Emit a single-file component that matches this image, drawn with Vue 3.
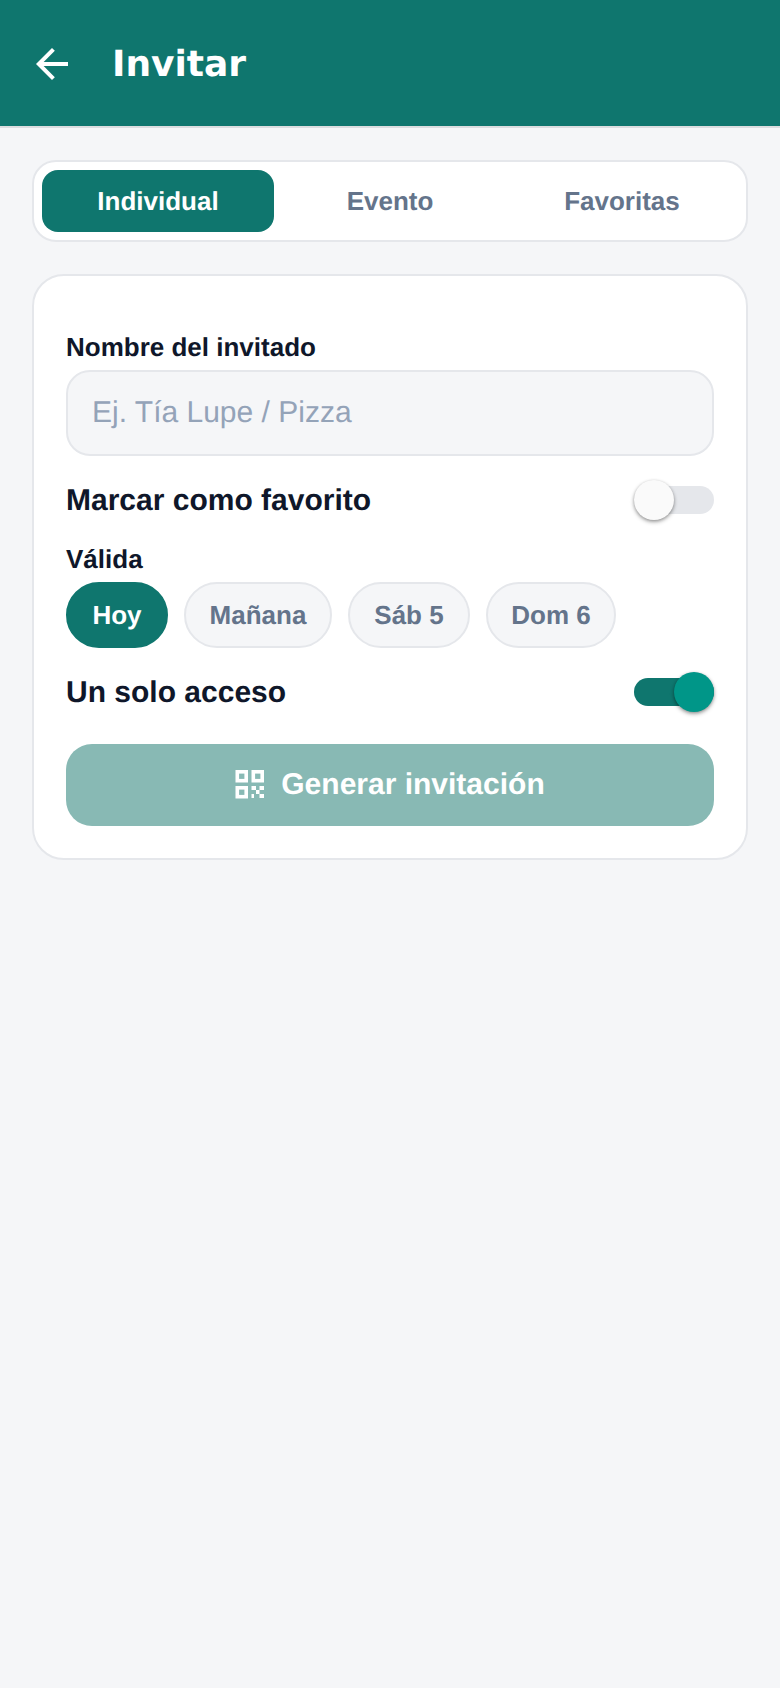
<script setup>
const tabs = ['Individual', 'Evento', 'Favoritas']
const chips = [
  { label: 'Hoy', width: 102 },
  { label: 'Mañana', width: 148 },
  { label: 'Sáb 5', width: 122 },
  { label: 'Dom 6', width: 130 },
]
const qrFrames = [
  { x: 2.3, y: 2.8 },
  { x: 18.3, y: 2.8 },
  { x: 2.3, y: 18.8 },
]
const qrBits = [
  { x: 16.5, y: 17, w: 4.5, h: 4 },
  { x: 24.5, y: 17, w: 4.5, h: 4 },
  { x: 21, y: 21, w: 3.5, h: 4 },
  { x: 16.5, y: 25, w: 2.5, h: 4 },
  { x: 24.5, y: 25, w: 4.5, h: 4 },
]
</script>

<template>
  <div class="page">
    <header class="bar">
      <svg class="back" viewBox="0 0 24 24" aria-label="Volver">
        <path d="M20 11H7.83l5.59-5.59L12 4l-8 8 8 8 1.41-1.41L7.83 13H20v-2z" />
      </svg>
      <h1 class="title">Invitar</h1>
    </header>

    <main class="content">
      <nav class="tabs">
        <button v-for="(t, i) in tabs" :key="t" class="tab" :class="{ on: i === 0 }">{{ t }}</button>
      </nav>

      <section class="card">
        <div class="field">
          <label class="label" for="guest">Nombre del invitado</label>
          <input id="guest" class="input" placeholder="Ej. Tía Lupe / Pizza" />
        </div>

        <div class="row">
          <span class="row-text">Marcar como favorito</span>
          <span class="switch"><span class="track"></span><span class="thumb"></span></span>
        </div>

        <div class="field">
          <span class="label">Válida</span>
          <div class="chips">
            <button
              v-for="(c, i) in chips"
              :key="c.label"
              class="chip"
              :class="{ on: i === 0 }"
              :style="{ width: c.width + 'px' }"
            >{{ c.label }}</button>
          </div>
        </div>

        <div class="row">
          <span class="row-text">Un solo acceso</span>
          <span class="switch active"><span class="track"></span><span class="thumb"></span></span>
        </div>

        <button class="generate">
          <svg class="qr" viewBox="0 0 30 30">
            <rect
              v-for="f in qrFrames"
              :key="f.x + '-' + f.y"
              class="qr-frame"
              :x="f.x"
              :y="f.y"
              width="8.9"
              height="8.9"
            />
            <rect
              v-for="b in qrBits"
              :key="b.x + '-' + b.y"
              class="qr-bit"
              :x="b.x"
              :y="b.y"
              :width="b.w"
              :height="b.h"
            />
          </svg>
          <span>Generar invitación</span>
        </button>
      </section>
    </main>
  </div>
</template>

<style scoped>
.page {
  min-height: 1688px;
  background: #f5f6f8;
  font-family: "Liberation Sans", Arial, sans-serif;
  color: #0f172a;
  box-sizing: border-box;
  text-rendering: geometricPrecision;
}
.bar {
  height: 126px;
  background: #0f766e;
  border-bottom: 2px solid #dcdddf;
  display: flex;
  align-items: center;
  padding-left: 28px;
  gap: 36px;
}
.back {
  width: 48px;
  height: 48px;
  margin-top: 2px;
  fill: #fff;
  flex: none;
}
.title {
  margin: 2px 0 0;
  font-family: "DejaVu Sans", sans-serif;
  font-size: 36px;
  font-weight: 700;
  color: #fff;
}
.content {
  padding: 32px;
  display: flex;
  flex-direction: column;
  gap: 32px;
}
.tabs {
  display: flex;
  padding: 8px;
  background: #fff;
  border: 2px solid #e5e7eb;
  border-radius: 24px;
}
.tab {
  flex: 1;
  height: 62px;
  border: 0;
  border-radius: 16px;
  background: transparent;
  font: 700 26px "Liberation Sans", Arial, sans-serif;
  text-rendering: geometricPrecision;
  color: #64748b;
  padding: 0;
}
.tab.on {
  background: #0f766e;
  color: #fff;
}
.card {
  background: #fff;
  border: 2px solid #e5e7eb;
  border-radius: 32px;
  padding: 56px 32px 32px;
  display: flex;
  flex-direction: column;
  gap: 24px;
}
.field {
  display: flex;
  flex-direction: column;
  gap: 8px;
}
.label {
  font-size: 26px;
  font-weight: 700;
  line-height: 30px;
}
.input {
  height: 86px;
  box-sizing: border-box;
  width: 100%;
  padding: 0 24px;
  background: #f5f6f8;
  border: 2px solid #e5e7eb;
  border-radius: 24px;
  font: 400 30px "Liberation Sans", Arial, sans-serif;
  text-rendering: geometricPrecision;
  outline: none;
}
.input::placeholder {
  color: #94a3b8;
  opacity: 1;
}
.row {
  display: flex;
  align-items: center;
  justify-content: space-between;
}
.row-text {
  margin-top: 2px;
  font-size: 30px;
  font-weight: 700;
}
.switch {
  display: flex;
  align-items: center;
  width: 80px;
  height: 40px;
  position: relative;
}
.track {
  width: 100%;
  height: 28px;
  border-radius: 14px;
  background: #e5e7eb;
}
.thumb {
  position: absolute;
  left: 0;
  top: 0;
  width: 40px;
  height: 40px;
  border-radius: 50%;
  background: #fafafa;
  box-shadow: 0 2px 4px rgba(0, 0, 0, 0.3), 0 1px 3px rgba(0, 0, 0, 0.2);
}
.switch.active .track {
  background: #0f766e;
}
.switch.active .thumb {
  left: 40px;
  background: #009688;
}
.chips {
  display: flex;
  gap: 16px;
}
.chip {
  height: 66px;
  padding: 0;
  border: 2px solid #e5e7eb;
  border-radius: 33px;
  background: #f5f6f8;
  font: 700 26px "Liberation Sans", Arial, sans-serif;
  text-rendering: geometricPrecision;
  color: #64748b;
}
.chip.on {
  background: #0f766e;
  border-color: #0f766e;
  color: #fff;
}
.generate {
  margin-top: 8px;
  height: 82px;
  padding: 0;
  border: 0;
  border-radius: 26px;
  background: #88b9b4;
  color: #fff;
  font: 700 30px "Liberation Sans", Arial, sans-serif;
  text-rendering: geometricPrecision;
  display: flex;
  align-items: center;
  justify-content: center;
  gap: 16px;
}
.qr {
  width: 30px;
  height: 30px;
  margin-bottom: 2px;
  flex: none;
}
.qr-frame {
  fill: none;
  stroke: #fff;
  stroke-width: 3.6;
}
.qr-bit {
  fill: #fff;
}
</style>

<style>
html, body { margin: 0; background: #f5f6f8; }
</style>
